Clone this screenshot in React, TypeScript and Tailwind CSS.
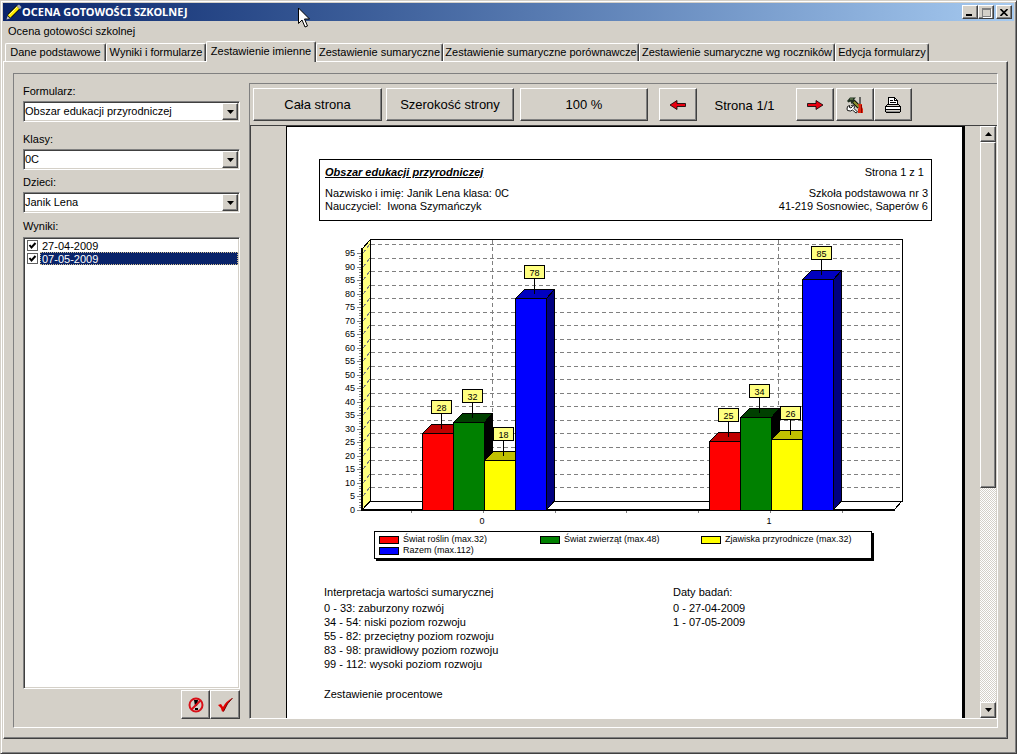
import { useState } from 'react';
import type { ReactNode } from 'react';

const RAISED =
  'bg-[#d4d0c8] border border-t-white border-l-white border-r-[#404040] border-b-[#404040] shadow-[inset_-1px_-1px_0_#808080]';
const SUNKEN =
  'bg-white border border-t-[#808080] border-l-[#808080] border-r-white border-b-white shadow-[inset_1px_1px_0_#404040,inset_-1px_-1px_0_#d4d0c8]';

const TABS = [
  { label: 'Dane podstawowe', width: 'w-[101px]' },
  { label: 'Wyniki i formularze', width: 'w-[100px]' },
  { label: 'Zestawienie imienne', width: 'w-[110px]' },
  { label: 'Zestawienie sumaryczne', width: 'w-[127px]' },
  { label: 'Zestawienie sumaryczne porównawcze', width: 'w-[196px]' },
  { label: 'Zestawienie sumaryczne wg roczników', width: 'w-[196px]' },
  { label: 'Edycja formularzy', width: 'w-[94px]' },
];

const SERIES = [
  { name: 'Świat roślin (max.32)', front: '#ff0000', top: '#c00000', side: '#800000', swatch: 'bg-[#ff0000]' },
  { name: 'Świat zwierząt (max.48)', front: '#008000', top: '#004000', side: '#000000', swatch: 'bg-[#008000]' },
  { name: 'Zjawiska przyrodnicze (max.32)', front: '#ffff00', top: '#c0c000', side: '#808000', swatch: 'bg-[#ffff00]' },
  { name: 'Razem (max.112)', front: '#0000ff', top: '#0000c0', side: '#000080', swatch: 'bg-[#0000ff]' },
];

const GROUPS = [
  { label: '0', x: 103, values: [28, 32, 18, 78] },
  { label: '1', x: 390, values: [25, 34, 26, 85] },
];

// skala wykresu
const BASE = 289;
const DX = 9;
const DY = 9;
const BAR = 31;
const yOf = (v: number) => Math.round(BASE - v * 2.705);

const Chart = () => {
  const steps = Array.from({ length: 20 }, (_, i) => i * 5);
  const minor = Array.from({ length: 96 }, (_, i) => i);
  return (
    <svg
      width="613"
      height="310"
      viewBox="0 0 613 310"
      className="block max-w-none font-['Liberation_Sans',Arial,sans-serif] text-[9px]"
      shapeRendering="crispEdges"
      role="img"
      aria-label="Wykres wyników"
    >
      {/* ściany */}
      <rect x="51.5" y="18.5" width="532" height="262" fill="#fff" stroke="#000" />
      <polygon points="43,28 51,19 51,280 43,289" fill="#ffff80" stroke="#000" />
      <polygon points="43,289 52,280 583,280 575,289" fill="#fff" stroke="#000" />
      {steps.map((v) => (
        <g key={v} stroke="#808080">
          {v > 0 && <line x1="52" x2="583" y1={yOf(v) - DY + 0.5} y2={yOf(v) - DY + 0.5} strokeDasharray="4 3" />}
          {v > 0 && <line x1="44" x2="51" y1={yOf(v)} y2={yOf(v) - DY} strokeDasharray="4 3" />}
          <line x1="38" x2="42" y1={yOf(v) + 0.5} y2={yOf(v) + 0.5} />
        </g>
      ))}
      {minor.map((v) => (
        <line key={v} x1="40" x2="42" y1={yOf(v) + 0.5} y2={yOf(v) + 0.5} stroke="#808080" />
      ))}
      <line x1="173.5" x2="173.5" y1="19" y2="280" stroke="#808080" strokeDasharray="4 3" />
      <line x1="459.5" x2="459.5" y1="19" y2="280" stroke="#808080" strokeDasharray="4 3" />
      <path d="M43 27V289H576" fill="none" stroke="#000" strokeWidth="2" />
      {[93, 165, 237, 308, 380, 452, 524].map((x) => (
        <line key={x} x1={x - 0.5} x2={x - 0.5} y1="290" y2="292" stroke="#808080" />
      ))}
      {steps.map((v) => (
        <text key={v} x="36" y={yOf(v) + 3} textAnchor="end">
          {v}
        </text>
      ))}

      {/* słupki */}
      {GROUPS.map((group) => (
        <g key={group.label}>
          {group.values.map((value, i) => {
            const x = group.x + i * BAR + 0.5;
            const y = yOf(value) - 0.5;
            const cx = x + 19;
            const s = SERIES[i];
            return (
              <g key={s.name} stroke="#000">
                <polygon
                  points={`${x + BAR},${y} ${x + BAR + 8},${y - DY} ${x + BAR + 8},${BASE - DY} ${x + BAR},${BASE}`}
                  fill={s.side}
                />
                <polygon points={`${x},${y} ${x + DX},${y - DY} ${x + BAR + 8},${y - DY} ${x + BAR},${y}`} fill={s.top} />
                <rect x={x} y={y} width={BAR} height={BASE - y} fill={s.front} />
                <line x1={cx} x2={cx} y1={y - 20} y2={y - 5} />
                <rect x={cx - 10} y={y - 33} width="20" height="13" fill="#ffff80" />
                <text x={cx} y={y - 23} textAnchor="middle" stroke="none">
                  {value}
                </text>
              </g>
            );
          })}
          <text x={group.x + 60} y="303" textAnchor="middle">
            {group.label}
          </text>
        </g>
      ))}
    </svg>
  );
};

const Legend = () => (
  <div className="ml-[55px] grid w-[498px] grid-cols-[161px_161px_auto] border border-black bg-white py-0.5 pl-1 text-[9px] leading-[11px] shadow-[2px_2px_0_#000]">
    {SERIES.map((s) => (
      <div key={s.name} className="flex items-center gap-1 whitespace-nowrap">
        <span className={`h-2 w-5 border border-black ${s.swatch}`} />
        {s.name}
      </div>
    ))}
  </div>
);

const Combo = ({ id, label, value, className }: { id: string; label: string; value: string; className?: string }) => (
  <div className={className}>
    <label htmlFor={id} className="mb-0.5 block leading-4">
      {label}
    </label>
    <div className={`relative h-[21px] ${SUNKEN}`}>
      <select id={id} defaultValue={value} className="block h-full w-full appearance-none bg-transparent pl-px outline-none">
        <option>{value}</option>
      </select>
      <span className={`pointer-events-none absolute top-px right-px flex h-[17px] w-4 items-center justify-center ${RAISED}`}>
        <svg width="7" height="4" viewBox="0 0 7 4" aria-hidden="true">
          <path d="M0 0H7L3.5 4Z" />
        </svg>
      </span>
    </div>
  </div>
);

const ToolButton = ({ children, className, label }: { children: ReactNode; className: string; label?: string }) => (
  <button type="button" aria-label={label} className={`flex h-[33px] shrink-0 items-center justify-center ${RAISED} ${className}`}>
    {children}
  </button>
);

const RedArrow = ({ flip }: { flip?: boolean }) => (
  <svg width="18" height="12" viewBox="0 0 18 12" className={flip ? 'rotate-180' : ''} aria-hidden="true">
    <path d="M1 6L8 1.500V4.500H16.500V7.500H8V10.500Z" fill="#e80010" stroke="#000" strokeWidth="0.800" />
  </svg>
);

const ToolsIcon = () => (
  <svg width="18" height="18" viewBox="0 0 18 18" aria-hidden="true">
    {/* klucz */}
    <path
      d="M1.500 10.500L3.500 9.500V11.500L5 12L6.500 10.500L5.500 9.500L7.500 9L8.500 11L8 12.500L11.500 16L10 17L6.500 14L4.500 15L1.500 14.500L1 13Z"
      fill="#fff"
      stroke="#000"
      strokeWidth="0.900"
    />
    {/* młotek */}
    <path d="M7 5L13 11" stroke="#000" strokeWidth="4" />
    <path d="M7 5L13 11" stroke="#8a9030" strokeWidth="2.400" />
    <path d="M1 5L4 1.500H10L8 3.500L8.500 5.500L5.500 8L4.500 5.500L2.500 6.500Z" fill="#203020" />
    <path d="M4 3H7" stroke="#7a9a60" />
    {/* śrubokręt */}
    <path d="M14 1V9" stroke="#404040" strokeWidth="1.500" />
    <path d="M12 8H16V11L17 13V17H12V13L13 11Z" fill="#e02810" />
    <path d="M15.500 9V17" stroke="#900000" />
  </svg>
);

const PrinterIcon = () => (
  <svg width="18" height="17" viewBox="0 0 18 17" shapeRendering="crispEdges" aria-hidden="true">
    <path d="M4.500 8.500V1.500H10.500L13.500 4.500V8.500" fill="#fff" stroke="#000" />
    <path d="M10.500 1V4.500H13M6 4.500H9M6 6.500H12" fill="none" stroke="#000" />
    <path d="M1.500 10.500L3.500 8.500H14.500L16.500 10.500V14.500L15.500 16.500H2.500L1.500 14.500Z" fill="#d4d0c8" stroke="#000" />
    <path d="M2 10.500H16M2 13.500H16" stroke="#000" />
    <path d="M2 12H16" stroke="#fff" strokeWidth="2" />
    <path d="M2 15H16" stroke="#909090" />
  </svg>
);

const ScrollButton = ({ down }: { down?: boolean }) => (
  <button
    type="button"
    aria-label={down ? 'W dół' : 'W górę'}
    className={`flex h-4 w-full shrink-0 items-center justify-center ${RAISED}`}
  >
    <svg width="7" height="4" viewBox="0 0 7 4" className={down ? '' : 'rotate-180'} aria-hidden="true">
      <path d="M0 0H7L3.5 4Z" />
    </svg>
  </button>
);

const TitleBar = () => (
  <header className="relative flex h-[18px] shrink-0 items-center bg-linear-to-r from-[#0a246a] to-[#a6caf0] pr-0.5 pl-[3px]">
    <svg width="16" height="16" viewBox="0 0 16 16" aria-hidden="true">
      <path d="M1 15L2 10L11 1L15 4L6 13Z" fill="#000" />
      <path d="M3 12.500L12 3.500" stroke="#ffee00" strokeWidth="3.600" />
      <path d="M3 11L11 3" stroke="#fff9a0" />
      <path d="M10.500 2L14 5.500L15.500 3L13 0.500Z" fill="#b0b0b0" />
      <path d="M0.500 15.500L1.500 12L4 14.500Z" fill="#c0c0c0" />
    </svg>
    <h1 className="font-['Noto_Sans',Tahoma,sans-serif] text-[11px] leading-4 font-bold whitespace-nowrap text-white">
      OCENA GOTOWOŚCI SZKOLNEJ
    </h1>
    <div className="ml-auto flex">
      <button type="button" aria-label="Minimalizuj" className={`flex h-3.5 w-4 items-end pb-0.5 pl-[3px] ${RAISED}`}>
        <span className="h-0.5 w-1.5 bg-black" />
      </button>
      <button type="button" aria-label="Maksymalizuj" disabled className={`flex h-3.5 w-4 items-center justify-center ${RAISED}`}>
        <span className="h-[9px] w-[9px] border border-t-2 border-[#808080] shadow-[1px_1px_0_#fff]" />
      </button>
      <button type="button" aria-label="Zamknij" className={`ml-0.5 flex h-3.5 w-4 items-center justify-center ${RAISED}`}>
        <svg width="8" height="7" viewBox="0 0 8 7" aria-hidden="true">
          <path d="M0.500 0L7.500 7M7.500 0L0.500 7" stroke="#000" strokeWidth="1.600" />
        </svg>
      </button>
    </div>
    {/* kursor myszy */}
    <svg width="13" height="21" viewBox="0 0 13 21" className="absolute top-1 left-[295px]" aria-hidden="true">
      <path d="M0.500 1V16.500L4 13L7 20L9.500 19L6.500 12H11.500Z" fill="#fff" stroke="#000" />
    </svg>
  </header>
);

const Report = () => (
  <article className="min-w-0 flex-1 overflow-hidden border-t border-r-[3px] border-l border-black bg-white pt-8 pr-[30px] pl-8">
    <div className="flex h-[62px] justify-between border border-black pt-1.5 pr-[3px] pl-[5px] leading-[13px] whitespace-nowrap">
      <div>
        <h2 className="mb-2 font-bold italic underline">Obszar edukacji przyrodniczej</h2>
        <p>Nazwisko i imię: Janik Lena klasa: 0C</p>
        <p>Nauczyciel:&nbsp; Iwona Szymańczyk</p>
      </div>
      <div className="text-right">
        <p className="mr-1 mb-2">Strona 1 z 1</p>
        <p>Szkoła podstawowa nr 3</p>
        <p>41-219 Sosnowiec, Saperów 6</p>
      </div>
    </div>
    <Chart />
    <Legend />
    <div className="mt-[26px] grid grid-cols-[349px_auto] pl-[5px] leading-[14px] whitespace-nowrap">
      <div>
        <h3 className="mb-0.5">Interpretacja wartości sumarycznej</h3>
        <p>0 - 33: zaburzony rozwój</p>
        <p>34 - 54: niski poziom rozwoju</p>
        <p>55 - 82: przeciętny poziom rozwoju</p>
        <p>83 - 98: prawidłowy poziom rozwoju</p>
        <p>99 - 112: wysoki poziom rozwoju</p>
        <p className="mt-4">Zestawienie procentowe</p>
      </div>
      <div>
        <h3 className="mb-0.5">Daty badań:</h3>
        <p>0 - 27-04-2009</p>
        <p>1 - 07-05-2009</p>
      </div>
    </div>
  </article>
);

const App = () => {
  const [activeTab, setActiveTab] = useState(2);
  const [selected, setSelected] = useState('07-05-2009');

  return (
    <div className="flex h-screen flex-col overflow-hidden border border-t-[#d4d0c8] border-r-[#404040] border-b-[#404040] border-l-[#d4d0c8] bg-[#d4d0c8] p-0.5 font-['Liberation_Sans',Arial,sans-serif] text-[11px] text-black shadow-[inset_1px_1px_0_#fff,inset_-1px_-1px_0_#808080]">
      <TitleBar />
      <nav className="flex h-5 shrink-0 items-center pl-[5px]">
        <button type="button">Ocena gotowości szkolnej</button>
      </nav>

      {/* zakładki */}
      <div role="tablist" className="flex h-5 shrink-0 items-end pl-0.5">
        {TABS.map((tab, i) => (
          <button
            key={tab.label}
            type="button"
            role="tab"
            aria-selected={i === activeTab}
            onClick={() => setActiveTab(i)}
            className={`shrink-0 rounded-t-xs border border-b-0 border-t-white border-r-[#404040] border-l-white bg-[#d4d0c8] whitespace-nowrap shadow-[inset_-1px_0_0_#808080] ${tab.width} ${
              i === activeTab ? 'relative -mb-px h-[21px] pb-0.5' : 'h-[18px]'
            }`}
          >
            {tab.label}
          </button>
        ))}
      </div>

      <main className="mr-1.5 flex min-h-0 flex-1 border border-t-white border-r-[#404040] border-b-[#404040] border-l-white px-[9px] pt-[11px] pb-2.5 shadow-[inset_-1px_-1px_0_#808080]">
        <div className="flex min-w-0 flex-1 gap-[9px] border border-t-[#808080] border-r-white border-b-white border-l-[#808080] pt-[9px] pb-2 pl-[9px]">
          <aside className="flex w-[217px] shrink-0 flex-col">
            <Combo id="formularz" label="Formularz:" value="Obszar edukacji przyrodniczej" />
            <Combo id="klasy" label="Klasy:" value="0C" className="mt-[9px]" />
            <Combo id="dzieci" label="Dzieci:" value="Janik Lena" className="mt-1" />
            <h2 className="mt-[5px] mb-[3px] leading-4">Wyniki:</h2>
            <div className={`min-h-0 flex-1 p-px ${SUNKEN}`}>
              {['27-04-2009', '07-05-2009'].map((date) => (
                <label key={date} className="flex h-[13px] items-center" onClick={() => setSelected(date)}>
                  <span className="relative mr-0.5 ml-0.5 block h-[11px] w-[11px]">
                    <input
                      type="checkbox"
                      defaultChecked
                      className="peer block h-[11px] w-[11px] appearance-none border border-[#606060] bg-white"
                    />
                    <svg
                      width="11"
                      height="11"
                      viewBox="0 0 11 11"
                      className="pointer-events-none absolute inset-0 hidden peer-checked:block"
                      aria-hidden="true"
                    >
                      <path d="M2.500 5L4.500 7.500L8.500 3" fill="none" stroke="#000" strokeWidth="2" />
                    </svg>
                  </span>
                  <span
                    className={`h-full flex-1 border pl-px leading-[12px] ${
                      selected === date ? 'border-dotted border-[#d4c090] bg-[#0a246a] text-white' : 'border-transparent'
                    }`}
                  >
                    {date}
                  </span>
                </label>
              ))}
            </div>
            <div className="mt-px flex justify-end">
              <button type="button" aria-label="Anuluj" className={`flex h-[29px] w-[29px] items-center justify-center ${RAISED}`}>
                <svg width="16" height="16" viewBox="0 0 16 16" aria-hidden="true">
                  <path d="M6 3H10L9 9H7Z M7 11H10V13H7Z" fill="#000" />
                  <circle cx="8" cy="8" r="6.500" fill="none" stroke="#d81018" strokeWidth="2" />
                  <path d="M12.500 3.500L3.500 12.500" stroke="#d81018" strokeWidth="2" />
                </svg>
              </button>
              <button type="button" aria-label="Zatwierdź" className={`flex h-[29px] w-[30px] items-center justify-center ${RAISED}`}>
                <svg width="16" height="16" viewBox="0 0 16 16" aria-hidden="true">
                  <path d="M1 8L4 7L6 10Q9 4 15.500 1Q10 6 6.500 14.500H5Q4 10 1 8Z" fill="#e00000" />
                  <path d="M6.500 14.500Q10 6 15.500 1" fill="none" stroke="#700000" />
                </svg>
              </button>
            </div>
          </aside>

          <section className="flex min-w-0 flex-1 flex-col border-t border-b border-l border-t-[#808080] border-b-white border-l-[#808080]">
            <div className="flex h-[41px] shrink-0 items-start pt-1 pl-[3px] text-[13px]">
              <ToolButton className="w-[129px]">Cała strona</ToolButton>
              <ToolButton className="ml-1 w-[128px]">Szerokość strony</ToolButton>
              <ToolButton className="ml-1.5 w-[128px]">100 %</ToolButton>
              <ToolButton label="Poprzednia strona" className="ml-[11px] w-[38px]">
                <RedArrow />
              </ToolButton>
              <span className="w-[99px] pt-1 pr-1 text-center leading-7">Strona 1/1</span>
              <ToolButton label="Następna strona" className="w-[38px]">
                <RedArrow flip />
              </ToolButton>
              <ToolButton label="Ustawienia" className="ml-0.5 w-[38px]">
                <ToolsIcon />
              </ToolButton>
              <ToolButton label="Drukuj" className="w-[38px]">
                <PrinterIcon />
              </ToolButton>
            </div>
            <div className="flex min-h-0 flex-1 border-t border-l border-[#404040] pr-px pl-[35px]">
              <Report />
              <div className="ml-[15px] flex w-4 shrink-0 flex-col bg-[repeating-conic-gradient(#fff_0_25%,#d4d0c8_0_50%)] bg-[length:2px_2px]">
                <ScrollButton />
                <div className={`h-[346px] shrink-0 ${RAISED}`} />
                <div className="flex-1" />
                <ScrollButton down />
              </div>
            </div>
          </section>
        </div>
      </main>
      <footer className="h-3 shrink-0" />
    </div>
  );
};

export default App;
